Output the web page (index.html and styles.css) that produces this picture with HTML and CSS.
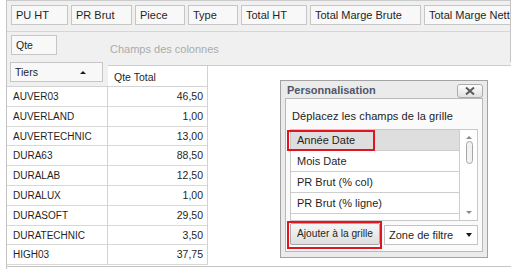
FILE: index.html
```html
<!DOCTYPE html>
<html lang="fr">
<head>
  <meta charset="UTF-8">
  <meta name="viewport" content="width=device-width, initial-scale=1.0">
  <title>Tableau croisé</title>
  <link rel="stylesheet" href="styles.css">
</head>
<body>
  <div class="pivot">
    <div class="area area-filter">
      <span class="field w57">PU HT</span>
      <span class="field w61">PR Brut</span>
      <span class="field w50">Piece</span>
      <span class="field w50">Type</span>
      <span class="field w66">Total HT</span>
      <span class="field w111">Total Marge Brute</span>
      <span class="field w110">Total Marge Nette</span>
    </div>

    <div class="area area-cols">
      <span class="field w46">Qte</span>
      <span class="hint">Champs des colonnes</span>
    </div>

    <div class="grid">
      <div class="row-head">
        <div class="rh-left">
          <span class="field sort">Tiers <i class="sort-arrow"></i></span>
        </div>
        <div class="rh-right">
          <div class="col-area">
            <div class="col-head">Qte Total</div>
          </div>
        </div>
      </div>

      <div class="row"><span class="name">AUVER03</span><span class="val">46,50</span></div>
      <div class="row"><span class="name">AUVERLAND</span><span class="val">1,00</span></div>
      <div class="row"><span class="name">AUVERTECHNIC</span><span class="val">13,00</span></div>
      <div class="row"><span class="name">DURA63</span><span class="val">88,50</span></div>
      <div class="row"><span class="name">DURALAB</span><span class="val">12,50</span></div>
      <div class="row"><span class="name">DURALUX</span><span class="val">1,00</span></div>
      <div class="row"><span class="name">DURASOFT</span><span class="val">29,50</span></div>
      <div class="row"><span class="name">DURATECHNIC</span><span class="val">3,50</span></div>
      <div class="row"><span class="name">HIGH03</span><span class="val">37,75</span></div>
    </div>

    <div class="popup">
      <div class="popup-head">
        <span class="popup-title">Personnalisation</span>
        <span class="close">
          <svg width="10" height="8" viewBox="0 0 10 8"><path d="M1 0.5 L9 7.5 M9 0.5 L1 7.5" stroke="#5c5c5c" stroke-width="2" fill="none"/></svg>
        </span>
      </div>
      <div class="popup-body">
        <div class="popup-text">Déplacez les champs de la grille</div>
        <div class="list">
          <div class="items">
            <div class="item selected">Année Date</div>
            <div class="item">Mois Date</div>
            <div class="item">PR Brut (% col)</div>
            <div class="item">PR Brut (% ligne)</div>
            <div class="item">PU HT (% col)</div>
          </div>
          <div class="scroll">
            <i class="up"></i>
            <i class="thumb"></i>
            <i class="down"></i>
          </div>
        </div>
        <div class="popup-foot">
          <span class="btn">Ajouter à la grille</span>
          <span class="select">Zone de filtre <i class="drop"></i></span>
        </div>
      </div>
      <div class="mark mark-item"></div>
      <div class="mark mark-btn"></div>
    </div>
  </div>
</body>
</html>
```

FILE: styles.css
```css
* {
  box-sizing: border-box;
}
body {
  margin: 0;
  font-family: "Liberation Sans", Arial, sans-serif;
  font-size: 10.5px;
  color: #1f1f1f;
  background: #fff;
}
.pivot {
  position: relative;
  margin-left: 6px;
  width: 505px;
  height: 269px;
  border-left: 1px solid #c4c4c4;
}

/* zones de champs */
.area {
  display: flex;
  gap: 3px;
  padding-left: 4px;
  background: #f0f0f0;
  border-right: 1px solid #c4c4c4;
  overflow: hidden;
}
.area-filter {
  height: 32px;
  padding-top: 4px;
  border-top: 1px solid #cacaca;
  border-bottom: 1px solid #d6d6d6;
}
.area-filter .field {
  font-size: 11px;
}
.area-cols {
  height: 30px;
  padding-top: 3px;
}
.field {
  flex-shrink: 0;
  height: 20px;
  line-height: 18px;
  padding: 0 4px;
  border: 1px solid #c6c6c6;
  background: #f8f8f8;
  white-space: nowrap;
}
.w46 { width: 46px; }
.w50 { width: 50px; }
.w57 { width: 57px; }
.w61 { width: 61px; }
.w66 { width: 66px; }
.w110 { width: 110px; }
.w111 { width: 111px; }
.hint {
  margin-left: 50px;
  padding-top: 8px;
  color: #ababab;
  font-size: 11px;
}

/* grille */
.grid {
  border-bottom: 1px solid #c4c4c4;
  width: 504px;
  padding-bottom: 1px;
}
.row-head {
  display: flex;
  height: 25px;
  background: #f0f0f0;
}
.rh-left {
  width: 101px;
  padding-left: 3px;
  border-bottom: 1px solid #d2d2d2;
}
.sort {
  display: flex;
  align-items: center;
  justify-content: space-between;
  width: 93px;
  padding-right: 16px;
}
.sort-arrow {
  width: 0;
  height: 0;
  border-left: 3px solid transparent;
  border-right: 3px solid transparent;
  border-bottom: 3px solid #1a1a1a;
}
.rh-right {
  flex: 1;
  padding-top: 3px;
}
.col-area {
  height: 22px;
  background: #fff;
  border-top: 1px solid #cbcbcb;
}
.col-head {
  width: 100px;
  height: 21px;
  line-height: 22px;
  padding-left: 6px;
  border-right: 1px solid #d2d2d2;
  border-bottom: 1px solid #d2d2d2;
}
.row {
  display: flex;
  height: 19.8px;
  line-height: 19px;
}
.name {
  width: 101px;
  padding-left: 6px;
  border-right: 1px solid #d2d2d2;
  border-bottom: 1px solid #d8d8d8;
  font-size: 10px;
}
.val {
  width: 100px;
  padding-right: 4px;
  text-align: right;
  border-right: 1px solid #d2d2d2;
  border-bottom: 1px solid #d8d8d8;
}

/* fenêtre de personnalisation */
.popup {
  position: absolute;
  left: 273px;
  top: 80px;
  width: 208px;
  height: 178px;
  display: flex;
  flex-direction: column;
  padding: 0 4px 5px;
  background: #ebebeb;
  border: 1px solid #a2a2a2;
  font-size: 11px;
}
.popup-head {
  height: 17px;
  display: flex;
  align-items: flex-end;
  justify-content: space-between;
  padding-left: 2px;
}
.popup-title {
  font-weight: bold;
  color: #4f5766;
  line-height: 14px;
  align-self: center;
}
.close {
  width: 26px;
  height: 14px;
  display: flex;
  align-items: center;
  justify-content: center;
  border: 1px solid #acacac;
  border-radius: 3px;
  background: linear-gradient(#fdfdfd, #e2e2e2);
}
.popup-body {
  flex: 1;
  border: 1px solid #b9b9b9;
  background: #fafafa;
}
.popup-text {
  height: 30px;
  padding: 10px 0 0 6px;
  line-height: 14px;
  color: #222;
  letter-spacing: 0.1px;
}
.list {
  display: flex;
  margin-left: 4px;
  width: 188px;
  height: 92px;
  border: 1px solid #c8c8c8;
  background: #fff;
}
.items {
  flex: 1;
  overflow: hidden;
}
.item {
  height: 21px;
  line-height: 20px;
  padding-left: 6px;
  border-right: 1px solid #cdcdcd;
  border-bottom: 1px solid #cdcdcd;
  background: #fff;
}
.item.selected {
  background: #dedede;
}
.scroll {
  position: relative;
  width: 17px;
}
.scroll i {
  position: absolute;
}
.up, .down {
  left: 6px;
  width: 0;
  height: 0;
  border-left: 3px solid transparent;
  border-right: 3px solid transparent;
}
.up {
  top: 6px;
  border-bottom: 3px solid #8a8a8a;
}
.down {
  bottom: 6px;
  border-top: 3px solid #8a8a8a;
}
.thumb {
  left: 6px;
  top: 11px;
  width: 7px;
  height: 23px;
  border: 1px solid #a6a6a6;
  border-radius: 4px;
  background: #f2f2f2;
}
.popup-foot {
  display: flex;
  gap: 4px;
  margin-top: 2px;
  padding-left: 4px;
}
.btn {
  width: 90px;
  height: 22px;
  line-height: 20px;
  padding: 0 2px;
  text-align: center;
  border: 1px solid #a9a9a9;
  border-radius: 2px;
  background: linear-gradient(#f6f6f6, #dedede);
  white-space: nowrap;
  font-size: 10.2px;
}
.select {
  display: flex;
  align-items: center;
  justify-content: space-between;
  width: 94px;
  height: 20px;
  margin-top: 2px;
  padding: 0 5px 0 4px;
  border: 1px solid #c4c4c4;
  background: #fff;
}
.drop {
  width: 0;
  height: 0;
  border-left: 3.5px solid transparent;
  border-right: 3.5px solid transparent;
  border-top: 4px solid #1a1a1a;
}

/* cadres rouges d'annotation */
.mark {
  position: absolute;
  border: 2px solid #e3141f;
}
.mark-item {
  left: 6px;
  top: 49px;
  width: 88px;
  height: 21px;
}
.mark-btn {
  left: 6px;
  top: 140px;
  width: 95px;
  height: 28px;
}
```
